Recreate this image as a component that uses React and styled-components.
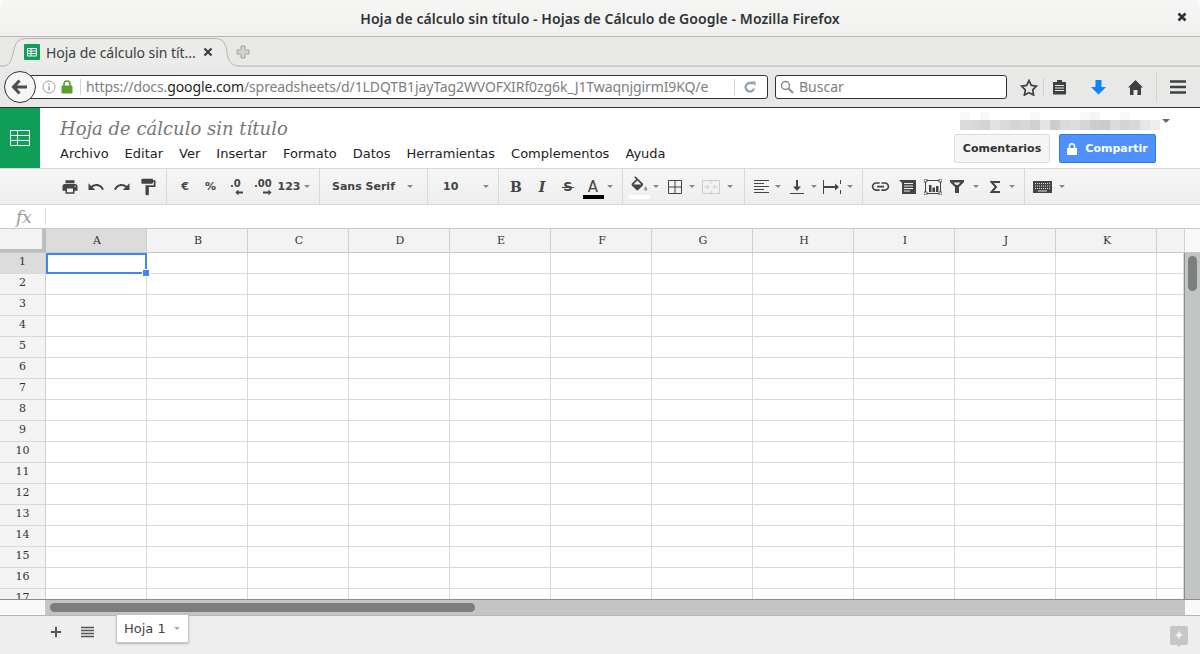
import React from 'react';
import styled, { createGlobalStyle } from 'styled-components';

const GlobalStyle = createGlobalStyle`
  html, body { margin: 0; padding: 0; height: 100%; overflow: hidden; background: #fff; }
  * { box-sizing: border-box; }
`;

const CHROME_FONT = '"Noto Sans", "Open Sans", sans-serif';
const DOCS_FONT = '"DejaVu Sans", sans-serif';
const GRID_FONT = '"DejaVu Serif", serif';

const Page = styled.div`
  width: 1200px;
  height: 654px;
  display: flex;
  flex-direction: column;
  overflow: hidden;
`;

/* ---------- Firefox window ---------- */
const TitleBar = styled.div`
  height: 37px;
  flex: none;
  display: flex;
  align-items: center;
  justify-content: center;
  position: relative;
  background: linear-gradient(#f6f6f5, #f0f0ef);
  border-bottom: 1px solid #b6b6b3;
  border-radius: 5px 5px 0 0;
  font: 600 14px ${CHROME_FONT};
  letter-spacing: 0.07px;
  color: #2e3436;
`;

const WindowClose = styled.svg`
  position: absolute;
  right: 13px;
  top: 12px;
`;

const TabStrip = styled.div`
  height: 30px;
  flex: none;
  display: flex;
  align-items: center;
  position: relative;
  background: #e8e8e7;
  padding-left: 24px;
`;

const TabShape = styled.svg`
  position: absolute;
  left: 0;
  top: 0;
`;

const Favicon = styled.svg`
  position: relative;
  flex: none;
`;

const TabTitle = styled.span`
  position: relative;
  margin-left: 6px;
  width: 157px;
  font: 400 14px ${CHROME_FONT};
  letter-spacing: -0.05px;
  color: #3b4042;
  white-space: nowrap;
`;

const TabClose = styled.svg`
  position: relative;
  flex: none;
`;

const NewTab = styled.svg`
  position: relative;
  flex: none;
  margin-left: 23px;
`;

const NavBar = styled.div`
  height: 41px;
  flex: none;
  display: flex;
  align-items: center;
  padding-left: 4px;
  background: #e8e8e7;
  border-bottom: 1px solid #2e3436;
`;

const BackButton = styled.div`
  width: 32px;
  height: 32px;
  flex: none;
  position: relative;
  z-index: 1;
  border-radius: 50%;
  border: 1px solid #2e3436;
  background: #f6f6f5;
  display: flex;
  align-items: center;
  justify-content: center;
`;

const UrlBar = styled.div`
  width: 748px;
  height: 24px;
  margin-left: -16px;
  display: flex;
  align-items: center;
  padding-left: 21px;
  background: #fff;
  border: 1px solid #2e3436;
  border-radius: 3px;
  font: 400 14px ${CHROME_FONT};
`;

const UrlIcon = styled.svg`
  flex: none;
  margin-left: ${p => p.$ml || 0}px;
`;

const UrlDivider = styled.div`
  width: 1px;
  height: 16px;
  flex: none;
  background: #d2d2d0;
  margin-left: ${p => p.$ml || 0}px;
`;

const UrlText = styled.div`
  width: 647px;
  flex: none;
  margin: -2px 0 0 5px;
  overflow: hidden;
  white-space: nowrap;
  letter-spacing: -0.1px;
  color: #7c8081;
`;

const UrlHost = styled.span`
  color: #1d1f20;
`;

const SearchBox = styled.div`
  width: 232px;
  height: 24px;
  margin-left: 7px;
  display: flex;
  align-items: center;
  gap: 5px;
  padding-left: 4px;
  background: #fff;
  border: 1px solid #2e3436;
  border-radius: 3px;
  font: 400 14px ${CHROME_FONT};
  color: #7c8081;
`;

const SearchLabel = styled.span`
  margin-top: -2px;
`;

const NavIcon = styled.svg`
  flex: none;
  margin-left: ${p => p.$ml}px;
`;

const NavDivider = styled.div`
  width: 1px;
  flex: none;
  height: ${p => p.$h}px;
  margin-left: ${p => p.$ml}px;
  background: ${p => p.$c};
`;

/* ---------- Docs header ---------- */
const DocsHeader = styled.div`
  height: 60px;
  flex: none;
  display: flex;
  background: #fff;
  font-family: ${DOCS_FONT};
`;

const LogoBlock = styled.div`
  width: 40px;
  flex: none;
  background: #0f9d58;
  display: flex;
  align-items: center;
  justify-content: center;
`;

const TitleColumn = styled.div`
  flex: 1;
  padding: 9px 0 0 20px;
`;

const DocTitle = styled.div`
  font: italic 400 18px/24px ${GRID_FONT};
  color: #777;
`;

const MenuRow = styled.div`
  display: flex;
  gap: 16px;
  margin-top: 5px;
  font-size: 13px;
  line-height: 16px;
  color: #222;
`;

const AccountColumn = styled.div`
  width: 246px;
  flex: none;
  padding: 4px 0 0 0;
`;

const AccountLine = styled.div`
  display: flex;
  align-items: center;
  height: 18px;
  margin-left: 6px;
`;

const BlurName = styled.div`
  display: grid;
  grid-template-columns: repeat(20, 10px);
  grid-template-rows: 8px 10px;
`;

const BlurCell = styled.div`
  background: ${p => p.$c};
`;

const SmallCaret = styled.div`
  width: 0;
  height: 0;
  flex: none;
  border-left: ${p => p.$size || 3.5}px solid transparent;
  border-right: ${p => p.$size || 3.5}px solid transparent;
  border-top: ${p => p.$size || 3.5}px solid ${p => p.$c || '#777'};
  margin-left: ${p => p.$ml || 0}px;
`;

const ActionRow = styled.div`
  display: flex;
  gap: 9px;
  margin-top: 4px;
`;

const CommentsButton = styled.div`
  width: 96px;
  height: 29px;
  display: flex;
  align-items: center;
  justify-content: center;
  background: #f5f5f5;
  border: 1px solid #dcdcdc;
  border-radius: 2px;
  font-size: 11px;
  font-weight: 700;
  color: #333;
`;

const ShareButton = styled.div`
  width: 97px;
  height: 29px;
  display: flex;
  align-items: center;
  justify-content: center;
  gap: 8px;
  background: #4d90fe;
  border: 1px solid #3079ed;
  border-radius: 2px;
  font-size: 11px;
  font-weight: 700;
  color: #fff;
`;

/* ---------- Toolbar ---------- */
const Toolbar = styled.div`
  height: 37px;
  flex: none;
  display: flex;
  background: linear-gradient(#f6f6f6, #eeeeee);
  border-top: 1px solid #d9d9d9;
  border-bottom: 1px solid #d9d9d9;
  font-family: ${DOCS_FONT};
  color: #444;
`;

const ToolGroup = styled.div`
  width: ${p => p.$w}px;
  flex: none;
  display: flex;
  align-items: center;
  padding-left: ${p => p.$pl || 0}px;
  border-right: ${p => (p.$last ? 'none' : '1px solid #d9d9d9')};
`;

const Tool = styled.div`
  width: ${p => p.$w || 26}px;
  height: 26px;
  flex: none;
  display: flex;
  flex-direction: column;
  align-items: center;
  justify-content: center;
  position: relative;
  margin-left: ${p => p.$ml || 0}px;
  font-size: ${p => p.$fs || 11}px;
  font-weight: ${p => p.$fw || 700};
  font-style: ${p => (p.$italic ? 'italic' : 'normal')};
  font-family: ${p => (p.$serif ? GRID_FONT : DOCS_FONT)};
  white-space: nowrap;
`;

const ToolCaret = styled.div`
  width: 8px;
  flex: none;
  display: flex;
  justify-content: center;
  margin-left: ${p => p.$ml || 0}px;
`;

const ToolLabel = styled.span`
  width: ${p => p.$w}px;
  flex: none;
  font-size: 11px;
  font-weight: 700;
  white-space: nowrap;
`;

const ColorBar = styled.div`
  position: absolute;
  width: 21px;
  height: 4px;
  left: ${p => p.$l}px;
  bottom: 1px;
  background: ${p => p.$c};
`;

const StrikeBar = styled.div`
  position: absolute;
  width: 12px;
  height: 1px;
  left: 7px;
  top: 13px;
  background: #444;
`;

const DecimalMark = styled.span`
  position: absolute;
  left: ${p => p.$l}px;
  top: 4px;
  font-size: 10px;
  font-weight: 700;
`;

/* ---------- Formula bar ---------- */
const FormulaBar = styled.div`
  height: 24px;
  flex: none;
  display: flex;
  align-items: center;
  background: #fff;
  border-bottom: 1px solid #c9c9c9;
`;

const FxLabel = styled.div`
  width: 45px;
  flex: none;
  text-align: center;
  padding-left: 3px;
  font: italic 400 17px ${GRID_FONT};
  color: #999;
`;

const FxDivider = styled.div`
  width: 1px;
  height: 17px;
  background: #dedede;
`;

/* ---------- Grid ---------- */
const GridArea = styled.div`
  height: 370px;
  flex: none;
  position: relative;
  display: flex;
  flex-direction: column;
  overflow: hidden;
  font-family: ${GRID_FONT};
  font-size: 11px;
  color: #333;
`;

const HeaderRow = styled.div`
  height: 24px;
  flex: none;
  display: flex;
  background: #f3f3f3;
  border-bottom: 1px solid #c9c9c9;
`;

const Corner = styled.div`
  width: 46px;
  flex: none;
  background: #f3f3f3;
  border-right: 4px solid #bdbdbd;
  border-bottom: 3px solid #bdbdbd;
`;

const ColHeader = styled.div`
  width: ${p => p.$w || 101}px;
  flex: none;
  display: flex;
  align-items: center;
  justify-content: center;
  padding-left: 2px;
  background: ${p => (p.$active ? '#dcdcdc' : '#f3f3f3')};
  border-right: 1px solid #d0d0d0;
`;

const HeaderEnd = styled.div`
  flex: 1;
  background: #f9f9f9;
`;

const GridBody = styled.div`
  height: 346px;
  flex: none;
  display: flex;
  overflow: hidden;
`;

const Rows = styled.div`
  width: 1185px;
  flex: none;
  overflow: hidden;
  border-right: 1px solid #8c8c8c;
`;

const Row = styled.div`
  height: 21px;
  display: flex;
`;

const RowHeader = styled.div`
  width: 46px;
  flex: none;
  display: flex;
  align-items: center;
  justify-content: center;
  background: ${p => (p.$active ? '#dcdcdc' : '#f3f3f3')};
  border-right: 1px solid #d0d0d0;
  border-bottom: 1px solid #d9d9d9;
  padding-bottom: 3px;
`;

const Cell = styled.div`
  width: ${p => p.$w || 101}px;
  flex: none;
  background: #fff;
  border-right: 1px solid #d9d9d9;
  border-bottom: 1px solid #d9d9d9;
`;

const SelectedCell = styled.div`
  position: absolute;
  left: 46px;
  top: 24px;
  width: 101px;
  height: 21px;
  border: 2px solid #4285f4;
`;

const FillHandle = styled.div`
  position: absolute;
  right: -4px;
  bottom: -4px;
  width: 6px;
  height: 6px;
  background: #4285f4;
  border: 1px solid #fff;
  box-sizing: content-box;
  margin: -1px;
`;

const VTrack = styled.div`
  flex: 1;
  background: #c3c5c4;
  padding: 3px 3px 0;
`;

const VThumb = styled.div`
  width: 9px;
  height: 35px;
  border-radius: 5px;
  background: #7a7e7e;
`;

const HScroll = styled.div`
  height: 17px;
  flex: none;
  display: flex;
  border-top: 1px solid #8c8c8c;
  border-bottom: 1px solid #b5b5b5;
`;

const HLeft = styled.div`
  width: 46px;
  flex: none;
  background: #f9f9f9;
  border-right: 1px solid #c9c9c9;
`;

const HTrack = styled.div`
  width: 1139px;
  flex: none;
  background: #c3c5c4;
  padding: 3px 0 0 4px;
`;

const HThumb = styled.div`
  width: 425px;
  height: 9px;
  border-radius: 5px;
  background: #7a7e7e;
`;

const HRight = styled.div`
  flex: 1;
  background: #f9f9f9;
`;

/* ---------- Footer ---------- */
const Footer = styled.div`
  flex: 1;
  display: flex;
  align-items: flex-start;
  position: relative;
  background: #eeeeee;
  padding-left: 50px;
  font-family: ${DOCS_FONT};
`;

const FooterIcon = styled.svg`
  flex: none;
  margin-top: 9px;
  margin-left: ${p => p.$ml || 0}px;
`;

const SheetTab = styled.div`
  width: 73px;
  height: 28px;
  margin-left: 22px;
  margin-top: -1px;
  display: flex;
  align-items: center;
  padding-left: 7px;
  gap: 8px;
  background: #fff;
  border: 1px solid #c9c9c9;
  border-top: none;
  border-radius: 0 0 2px 2px;
  box-shadow: 0 1px 2px rgba(0, 0, 0, 0.25);
  font-size: 13px;
  color: #444;
`;

const ExploreButton = styled.svg`
  position: absolute;
  right: 12px;
  top: 10px;
`;

const COLUMNS = ['A', 'B', 'C', 'D', 'E', 'F', 'G', 'H', 'I', 'J', 'K'];
const ROWS = Array.from({ length: 17 }, (_, i) => i + 1);
const MENUS = ['Archivo', 'Editar', 'Ver', 'Insertar', 'Formato', 'Datos', 'Herramientas', 'Complementos', 'Ayuda'];

const BLUR_TOP = ['#f8f8f8', '#fff', '#f8f8f8', '#fff', '#fff', '#fff', '#fff', '#f8f8f8', '#fff', '#fff', '#fff', '#fff', '#f8f8f8', '#f4f4f4', '#fff', '#fff', '#f8f8f8', '#fff', '#fff', '#fff'];
const BLUR_BOTTOM = ['#dadada', '#d8d8d8', '#d4d4d4', '#e2e2e2', '#dadada', '#d4d4d4', '#d8d8d8', '#d0d0d0', '#e4e4e4', '#cdcdcd', '#dadada', '#dddddd', '#d6d6d6', '#cdcdcd', '#cbcbcb', '#dadada', '#d4d4d4', '#d8d8d8', '#e6e6e6', '#eeeeee'];

const Ico = ({ d, size = 18, fill = '#444', flip }) => (
  <svg width={size} height={size} viewBox="0 0 24 24" style={flip ? { transform: 'scaleX(-1)' } : undefined}>
    <path d={d} fill={fill} />
  </svg>
);

const P_PRINT = 'M19 8H5c-1.66 0-3 1.34-3 3v6h4v4h12v-4h4v-6c0-1.66-1.34-3-3-3zm-3 11H8v-5h8v5zm3-7c-.55 0-1-.45-1-1s.45-1 1-1 1 .45 1 1-.45 1-1 1zm-1-9H6v4h12V3z';
const P_UNDO = 'M12.5 8c-2.65 0-5.05.99-6.9 2.6L2 7v9h9l-3.62-3.62c1.39-1.16 3.16-1.88 5.12-1.88 3.54 0 6.55 2.31 7.6 5.5l2.37-.78C21.08 11.03 17.15 8 12.5 8z';
const P_PAINT = 'M18 4V3c0-.55-.45-1-1-1H5c-.55 0-1 .45-1 1v4c0 .55.45 1 1 1h12c.55 0 1-.45 1-1V6h1v4H9v11c0 .55.45 1 1 1h2c.55 0 1-.45 1-1v-9h8V4h-3z';
const P_FILL = 'M16.56 8.94L7.62 0 6.21 1.41l2.38 2.38-5.15 5.15c-.59.59-.59 1.54 0 2.12l5.5 5.5c.29.29.68.44 1.06.44s.77-.15 1.06-.44l5.5-5.5c.59-.58.59-1.53 0-2.12zM5.21 10L10 5.21 14.79 10H5.21z';
const P_LINK = 'M3.9 12c0-1.71 1.39-3.1 3.1-3.1h4V7H7c-2.76 0-5 2.24-5 5s2.24 5 5 5h4v-1.9H7c-1.71 0-3.1-1.39-3.1-3.1zM8 13h8v-2H8v2zm9-6h-4v1.9h4c1.71 0 3.1 1.39 3.1 3.1s-1.39 3.1-3.1 3.1h-4V17h4c2.76 0 5-2.24 5-5s-2.24-5-5-5z';

const Caret = ({ ml }) => (
  <ToolCaret $ml={ml}><SmallCaret $size={3} $c="#888" /></ToolCaret>
);

function BrowserChrome() {
  return (
    <>
      <TitleBar>
        Hoja de cálculo sin título - Hojas de Cálculo de Google - Mozilla Firefox
        <WindowClose width="10" height="10" viewBox="0 0 10 10">
          <path d="M1.5 1.5l7 7M8.5 1.5l-7 7" stroke="#2e3436" strokeWidth="2.6" />
        </WindowClose>
      </TitleBar>
      <TabStrip>
        <TabShape width="1200" height="30" viewBox="0 0 1200 30">
          <path d="M0 29H3C9 29 11 25 13 17C15 6 17 1.500 28 1.500H214C223 1.500 226 6 227 16C228 24 232 29 239 29H1200" fill="#ebebea" stroke="#b3b3b0" />
        </TabShape>
        <Favicon width="16" height="16" viewBox="0 0 16 16">
          <rect width="16" height="16" rx="1" fill="#0f9d58" />
          <path d="M3.500 4.500h9v7.500h-9zM3.500 7h9M3.500 9.500h9M7 4.500v7.500" fill="none" stroke="#fff" />
        </Favicon>
        <TabTitle>Hoja de cálculo sin tít...</TabTitle>
        <TabClose width="10" height="10" viewBox="0 0 10 10">
          <path d="M1.500 1.500l7 7M8.500 1.500l-7 7" stroke="#3b4042" strokeWidth="2.2" />
        </TabClose>
        <NewTab width="14" height="14" viewBox="0 0 14 14">
          <path d="M5 1h4v4h4v4H9v4H5V9H1V5h4z" fill="#d3d3d1" stroke="#a2a2a0" />
        </NewTab>
      </TabStrip>
      <NavBar>
        <BackButton>
          <svg width="18" height="16" viewBox="0 0 18 16">
            <path d="M8.500 1.500L2.500 8l6 6.500M3 8h13" fill="none" stroke="#4a4f51" strokeWidth="3" />
          </svg>
        </BackButton>
        <UrlBar>
          <UrlIcon width="14" height="14" viewBox="0 0 14 14">
            <circle cx="7" cy="7" r="6" fill="none" stroke="#9c9c9c" />
            <path d="M7 6v4.500M7 3.500v1.500" stroke="#9c9c9c" strokeWidth="1.300" />
          </UrlIcon>
          <UrlIcon $ml={5} width="12" height="14" viewBox="0 0 12 14">
            <path d="M1 6h10v7H1z" fill="#58a02c" stroke="#58a02c" />
            <path d="M3 6V4a3 3 0 0 1 6 0v2" fill="none" stroke="#58a02c" strokeWidth="1.600" />
          </UrlIcon>
          <UrlDivider $ml={7} />
          <UrlText>https://docs.<UrlHost>google.com</UrlHost>/spreadsheets/d/1LDQTB1jayTag2WVOFXIRf0zg6k_J1TwaqnjgirmI9KQ/e</UrlText>
          <UrlIcon width="1" height="1" viewBox="0 0 1 1" />
          <UrlDivider />
          <UrlIcon $ml={9} width="12" height="12" viewBox="0 0 12 12">
            <path d="M10 7.500A4.300 4.300 0 1 1 8.800 3" fill="none" stroke="#8f9da6" strokeWidth="2.200" />
            <path d="M7 .5h4.500v4.500z" fill="#8f9da6" />
          </UrlIcon>
        </UrlBar>
        <SearchBox>
          <svg width="14" height="14" viewBox="0 0 14 14">
            <circle cx="5.500" cy="5.500" r="4" fill="none" stroke="#8a8a8a" strokeWidth="1.500" />
            <path d="M8.500 8.500l4.500 4.500" stroke="#8a8a8a" strokeWidth="2" />
          </svg>
          <SearchLabel>Buscar</SearchLabel>
        </SearchBox>
        <NavIcon $ml={13} width="18" height="17" viewBox="0 0 18 17">
          <path d="M9 1.500l2.300 4.900 5.200.7-3.800 3.700.9 5.300L9 13.600l-4.600 2.500.9-5.300L1.500 7.100l5.200-.7z" fill="none" stroke="#3c4143" strokeWidth="1.700" />
        </NavIcon>
        <NavDivider $ml={5} $h={18} $c="#cfcfcd" />
        <NavIcon $ml={8} width="15" height="16" viewBox="0 0 15 16">
          <path d="M1 3h13v12.500H1z" fill="#3c4143" />
          <path d="M5 1h5v3H5z" fill="#3c4143" />
          <path d="M3 6.500h9M3 9h9M3 11.500h9" stroke="#e8e8e7" />
        </NavIcon>
        <NavIcon $ml={24} width="15" height="15" viewBox="0 0 15 15">
          <path d="M4.500 0h6v7H15l-7.500 7.500L0 7h4.500z" fill="#0a84ff" />
        </NavIcon>
        <NavIcon $ml={22} width="15" height="15" viewBox="0 0 15 15">
          <path d="M7.500 0L15 7.500h-2V15H9.500v-5h-4v5H2V7.500H0z" fill="#3c4143" />
        </NavIcon>
        <NavDivider $ml={13} $h={30} $c="#d4d4d2" />
        <NavIcon $ml={13} width="16" height="14" viewBox="0 0 16 14">
          <path d="M0 1.500h16M0 7h16M0 12.500h16" stroke="#3c4143" strokeWidth="2.400" />
        </NavIcon>
      </NavBar>
    </>
  );
}

function Header() {
  return (
    <DocsHeader>
      <LogoBlock>
        <svg width="20" height="16" viewBox="0 0 20 16">
          <path d="M.5.500h19v15H.5zM.5 5.500h19M.5 10.500h19M7.500.5v15" fill="none" stroke="#fff" />
        </svg>
      </LogoBlock>
      <TitleColumn>
        <DocTitle>Hoja de cálculo sin título</DocTitle>
        <MenuRow>
          {MENUS.map(m => <span key={m}>{m}</span>)}
        </MenuRow>
      </TitleColumn>
      <AccountColumn>
        <AccountLine>
          <BlurName>
            {BLUR_TOP.map((c, i) => <BlurCell key={'t' + i} $c={c} />)}
            {BLUR_BOTTOM.map((c, i) => <BlurCell key={'b' + i} $c={c} />)}
          </BlurName>
          <SmallCaret $size={4} $c="#666" $ml={2} />
        </AccountLine>
        <ActionRow>
          <CommentsButton>Comentarios</CommentsButton>
          <ShareButton>
            <svg width="10" height="12" viewBox="0 0 10 12">
              <path d="M0 5h10v7H0z" fill="#fff" />
              <path d="M2.500 5V3.200a2.500 2.500 0 0 1 5 0V5" fill="none" stroke="#fff" strokeWidth="1.500" />
            </svg>
            Compartir
          </ShareButton>
        </ActionRow>
      </AccountColumn>
    </DocsHeader>
  );
}

function ToolRow() {
  return (
    <Toolbar>
      <ToolGroup $w={167} $pl={57}>
        <Tool><Ico d={P_PRINT} /></Tool>
        <Tool><Ico d={P_UNDO} /></Tool>
        <Tool><Ico d={P_UNDO} flip /></Tool>
        <Tool><Ico d={P_PAINT} size={20} /></Tool>
      </ToolGroup>
      <ToolGroup $w={153} $pl={5}>
        <Tool>€</Tool>
        <Tool $w={25}>%</Tool>
        <Tool>
          <DecimalMark $l={7}>.0</DecimalMark>
          <svg width="26" height="26" viewBox="0 0 26 26">
            <path d="M20 18.500h-7" fill="none" stroke="#444" strokeWidth="2" />
            <path d="M15.500 15.500l-3 3 3 3z" fill="#444" />
          </svg>
        </Tool>
        <Tool>
          <DecimalMark $l={5}>.00</DecimalMark>
          <svg width="26" height="26" viewBox="0 0 26 26">
            <path d="M14 18.500h6" fill="none" stroke="#444" strokeWidth="2" />
            <path d="M19.500 15.500l3 3-3 3z" fill="#444" />
          </svg>
        </Tool>
        <Tool $w={28}>123</Tool>
        <Caret />
      </ToolGroup>
      <ToolGroup $w={108} $pl={12}>
        <ToolLabel $w={74}>Sans Serif</ToolLabel>
        <Caret />
      </ToolGroup>
      <ToolGroup $w={71} $pl={15}>
        <ToolLabel $w={39}>10</ToolLabel>
        <Caret />
      </ToolGroup>
      <ToolGroup $w={124} $pl={4}>
        <Tool $serif $fs={14}>B</Tool>
        <Tool $italic $serif $fs={14}>I</Tool>
        <Tool $fs={13}>
          S
          <StrikeBar />
        </Tool>
        <Tool $w={24} $fs={15} $fw={400}>
          A
          <ColorBar $c="#000" $l={2} />
        </Tool>
        <Caret ml={1} />
      </ToolGroup>
      <ToolGroup $w={122} $pl={3}>
        <Tool>
          <svg width="20" height="22" viewBox="0 0 24 26">
            <path d={P_FILL} fill="#444" />
            <path d="M4.500 10.500h11l-5.500 5.500z" fill="#444" />
            <path d="M20 12s-2 2.200-2 3.500a2 2 0 0 0 4 0c0-1.300-2-3.500-2-3.500z" fill="#999" />
          </svg>
          <ColorBar $c="#fff" $l={3} />
        </Tool>
        <Caret />
        <Tool $ml={2}>
          <svg width="14" height="14" viewBox="0 0 14 14">
            <path d="M.5.500h13v13H.5zM7 .5v13M.5 7h13" fill="none" stroke="#444" />
          </svg>
        </Tool>
        <Caret />
        <Tool $ml={2}>
          <svg width="18" height="14" viewBox="0 0 18 14">
            <path d="M.5.500h17v13H.5zM9 .5v3M9 10.500v3" fill="none" stroke="#ccc" />
            <path d="M2 7h5M5 5l2 2-2 2M16 7h-5M13 5l-2 2 2 2" fill="none" stroke="#ccc" />
          </svg>
        </Tool>
        <Caret ml={2} />
      </ToolGroup>
      <ToolGroup $w={118} $pl={3}>
        <Tool>
          <svg width="15" height="13" viewBox="0 0 15 13">
            <path d="M0 .5h15M0 3.500h10M0 6.500h15M0 9.500h10M0 12.500h15" stroke="#444" />
          </svg>
        </Tool>
        <Caret />
        <Tool $ml={2}>
          <svg width="14" height="14" viewBox="0 0 14 14">
            <path d="M7 0v8" stroke="#444" strokeWidth="2" />
            <path d="M3 6.500h8l-4 4.500z" fill="#444" />
            <path d="M0 13.500h14" stroke="#444" />
          </svg>
        </Tool>
        <Caret />
        <Tool $ml={1}>
          <svg width="18" height="14" viewBox="0 0 18 14">
            <path d="M.5 0v14" stroke="#444" />
            <path d="M17.500 0v4M17.500 10v4" stroke="#444" />
            <path d="M1 7h12" stroke="#444" strokeWidth="2" />
            <path d="M12 3.500l4 3.500-4 3.500z" fill="#444" />
          </svg>
        </Tool>
        <Caret ml={1} />
      </ToolGroup>
      <ToolGroup $w={162} $pl={4}>
        <Tool><Ico d={P_LINK} size={21} /></Tool>
        <Tool $ml={1}>
          <svg width="17" height="14" viewBox="0 0 17 14">
            <path d="M0 0h17v14H3V3z" fill="#444" />
            <path d="M5 3.500h9M5 6h9M5 8.500h9M5 11h6" stroke="#eee" />
          </svg>
        </Tool>
        <Tool>
          <svg width="18" height="16" viewBox="0 0 18 16">
            <path d="M1.500 1.500h15v13h-15z" fill="none" stroke="#444" />
            <path d="M0 0h3v3H0zM15 0h3v3h-3zM0 13h3v3H0zM15 13h3v3h-3z" fill="#eee" stroke="#444" strokeWidth=".8" />
            <path d="M5 6h2.500v7H5zM8.500 8.500H11V13H8.500zM12 7h2.500v6H12z" fill="#444" />
          </svg>
        </Tool>
        <Tool $ml={-2}>
          <svg width="14" height="13" viewBox="0 0 14 13">
            <path d="M0 0h14v2L9 7v6H5V7L0 2z" fill="#444" />
            <path d="M3.500 2.500h7L8 5H6z" fill="#eee" />
          </svg>
        </Tool>
        <Caret ml={2} />
        <Tool $ml={2}>
          <svg width="10" height="12" viewBox="0 0 10 12">
            <path d="M10 1H1.500L6 6l-4.500 5H10" fill="none" stroke="#444" strokeWidth="2" />
          </svg>
        </Tool>
        <Caret />
      </ToolGroup>
      <ToolGroup $last $w={175} $pl={4}>
        <Tool>
          <svg width="19" height="12" viewBox="0 0 19 12">
            <path d="M0 0h19v12H0z" fill="#444" />
            <path d="M2 2.500h15M2 5h15M2 7.500h15" stroke="#ddd" strokeDasharray="1 1" />
            <path d="M5 10h9" stroke="#ddd" />
          </svg>
        </Tool>
        <Caret ml={3} />
      </ToolGroup>
    </Toolbar>
  );
}

function Sheet() {
  return (
    <GridArea>
      <HeaderRow>
        <Corner />
        {COLUMNS.map((c, i) => <ColHeader key={c} $active={i === 0}>{c}</ColHeader>)}
        <ColHeader $w={28} />
        <HeaderEnd />
      </HeaderRow>
      <GridBody>
        <Rows>
          {ROWS.map(r => (
            <Row key={r}>
              <RowHeader $active={r === 1}>{r}</RowHeader>
              {COLUMNS.map(c => <Cell key={c} />)}
              <Cell $w={27} />
            </Row>
          ))}
        </Rows>
        <VTrack><VThumb /></VTrack>
      </GridBody>
      <SelectedCell><FillHandle /></SelectedCell>
    </GridArea>
  );
}

export default function App() {
  return (
    <Page>
      <GlobalStyle />
      <BrowserChrome />
      <Header />
      <ToolRow />
      <FormulaBar>
        <FxLabel>fx</FxLabel>
        <FxDivider />
      </FormulaBar>
      <Sheet />
      <HScroll>
        <HLeft />
        <HTrack><HThumb /></HTrack>
        <HRight />
      </HScroll>
      <Footer>
        <FooterIcon width="12" height="14" viewBox="0 0 12 14">
          <path d="M6 2v10M1 7h10" stroke="#555" strokeWidth="2" />
        </FooterIcon>
        <FooterIcon $ml={19} width="13" height="14" viewBox="0 0 13 14">
          <path d="M0 2.500h13M0 5.500h13M0 8.500h13M0 11.500h13" stroke="#555" strokeWidth="1.500" />
        </FooterIcon>
        <SheetTab>
          Hoja 1
          <SmallCaret $size={3.5} $c="#aaa" />
        </SheetTab>
        <ExploreButton width="18" height="21" viewBox="0 0 18 21">
          <path d="M2 0h14a2 2 0 0 1 2 2v15a2 2 0 0 1-2 2h-5l-2 2-2-2H2a2 2 0 0 1-2-2V2a2 2 0 0 1 2-2z" fill="#c6c6c6" />
          <path d="M9 4c.6 3.200 1.800 4.400 5 5-3.200.6-4.400 1.800-5 5-.6-3.200-1.800-4.400-5-5 3.200-.6 4.400-1.800 5-5z" fill="#f0f0f0" />
        </ExploreButton>
      </Footer>
    </Page>
  );
}
